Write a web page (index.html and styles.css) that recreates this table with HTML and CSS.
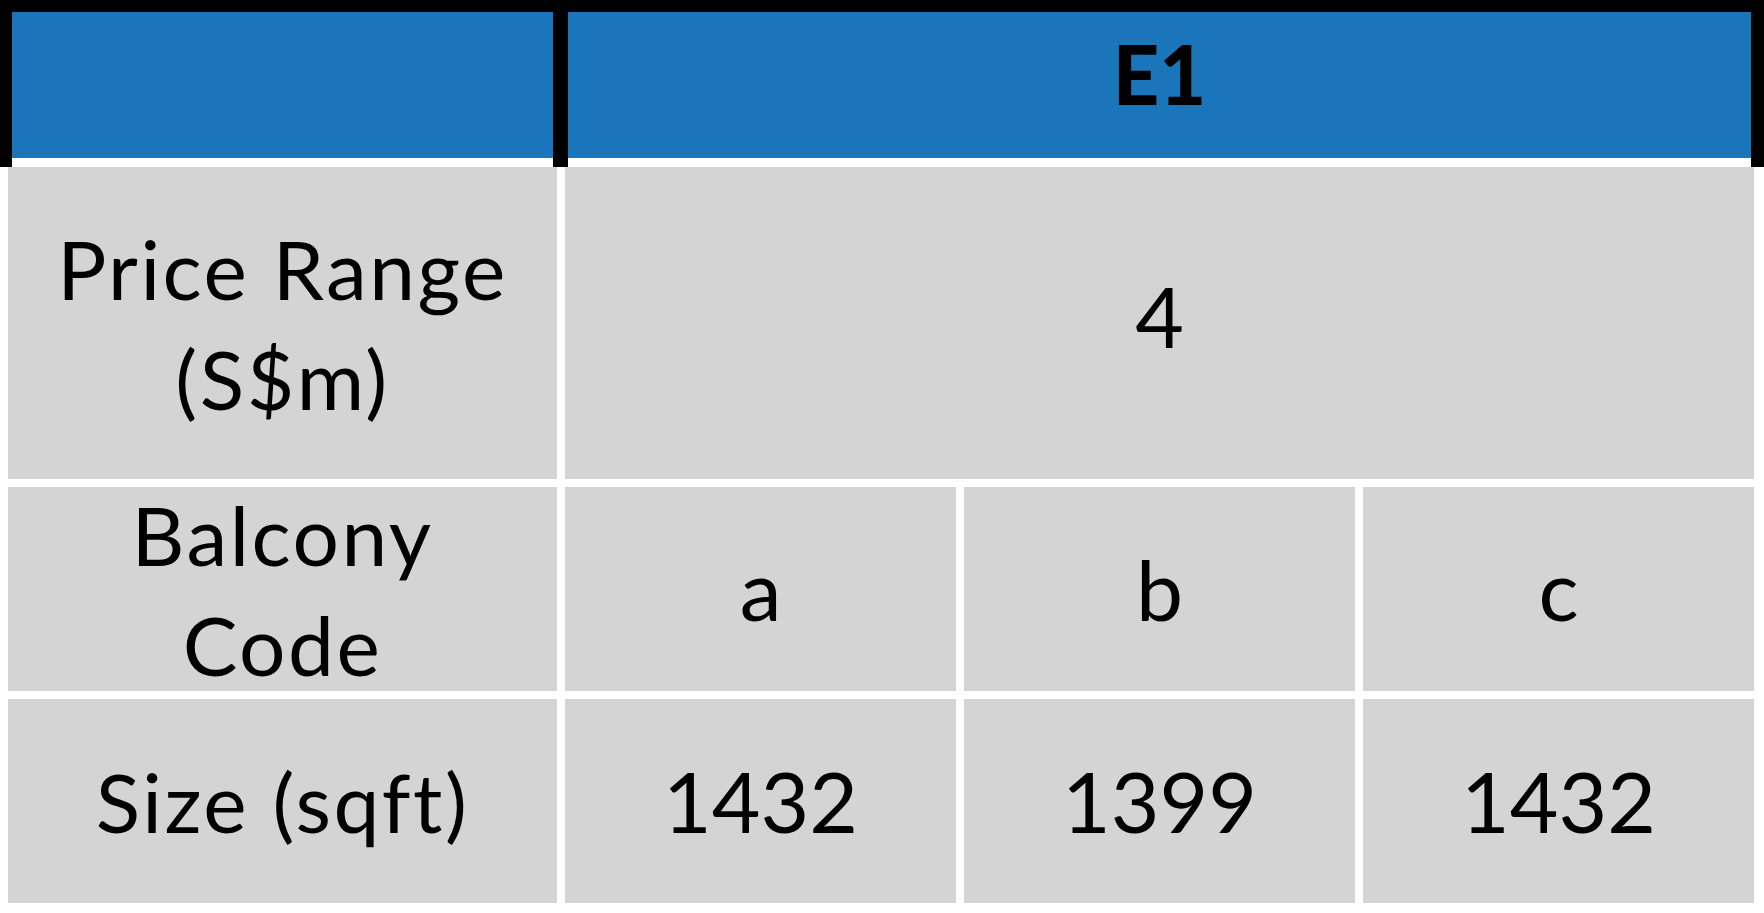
FILE: index.html
```html
<!DOCTYPE html>
<html>
<head>
<meta charset="utf-8">
<link rel="stylesheet" href="styles.css">
</head>
<body>
<div class="sheet">
  <div class="head">
    <div class="hcell"></div>
    <div class="hcell"><span class="htext">E1</span></div>
  </div>
  <div class="grid">
    <div class="cell label">Price Range<br>(S$m)</div>
    <div class="cell value span3 lift">4</div>
    <div class="cell label">Balcony<br>Code</div>
    <div class="cell value">a</div>
    <div class="cell value">b</div>
    <div class="cell value">c</div>
    <div class="cell label">Size (sqft)</div>
    <div class="cell value">1432</div>
    <div class="cell value">1399</div>
    <div class="cell value">1432</div>
  </div>
</div>
</body>
</html>
```
FILE: styles.css
```css
html, body {
  margin: 0;
  padding: 0;
  background: #ffffff;
}
body {
  width: 1764px;
  height: 913px;
  overflow: hidden;
  font-family: Lato, "Open Sans", sans-serif;
  color: #000000;
}
.sheet {
  display: flex;
  flex-direction: column;
}
.head {
  background: #000000;
  padding: 12px 13px 0 12px;
  display: grid;
  grid-template-columns: 541px 1fr;
  column-gap: 15px;
}
.hcell {
  height: 146px;
  background: #1b75bb;
  border-bottom: 9px solid #ffffff;
  text-align: center;
  box-sizing: content-box;
}
.htext {
  display: block;
  padding-top: 13px;
  font-size: 81px;
  font-weight: 900;
  line-height: 97px;
}
.grid {
  margin: 0 10px 10px 8px;
  display: grid;
  grid-template-columns: 549px repeat(3, 1fr);
  grid-template-rows: 312px 204px 204px;
  column-gap: 8px;
  row-gap: 8px;
}
.cell {
  background: #d4d4d4;
  display: flex;
  align-items: center;
  justify-content: center;
  text-align: center;
  font-weight: 400;
}
.label {
  font-size: 82px;
  line-height: 110px;
  letter-spacing: 2.5px;
}
.value {
  font-size: 84px;
  line-height: 110px;
}
.lift {
  padding-bottom: 14px;
}
.span3 {
  grid-column: span 3;
}
```
